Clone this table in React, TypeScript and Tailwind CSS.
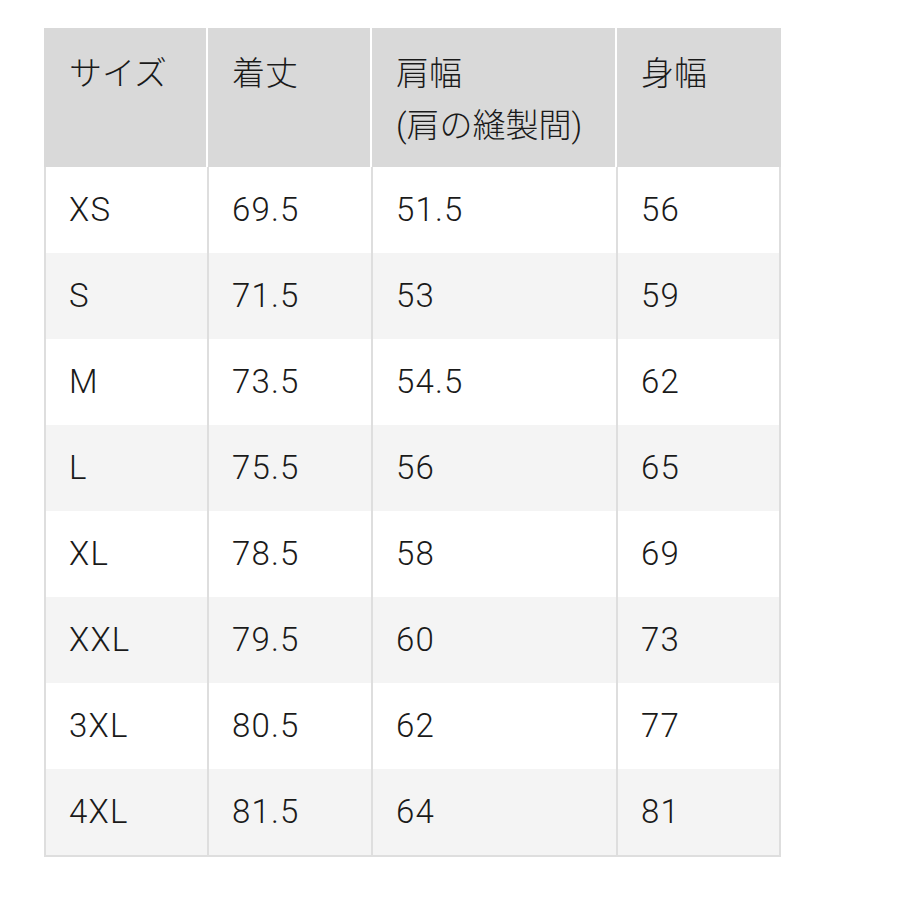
import React from "react";

const rows = [
  ["XS", "69.5", "51.5", "56"],
  ["S", "71.5", "53", "59"],
  ["M", "73.5", "54.5", "62"],
  ["L", "75.5", "56", "65"],
  ["XL", "78.5", "58", "69"],
  ["XXL", "79.5", "60", "73"],
  ["3XL", "80.5", "62", "77"],
  ["4XL", "81.5", "64", "81"],
];

const widths = ["w-[163px]", "w-[164px]", "w-[245px]", "w-[165px]"];

export default function App() {
  return (
    <div
      className="w-[900px] h-[900px] bg-white pt-[28px] pl-[44px] text-[#1a1a1a] font-light"
      style={{ fontFamily: 'Roboto, "Noto Sans CJK JP", sans-serif' }}
    >
      <div className="w-[737px]">
        <div className="flex gap-[2px]">
          <div className="w-[162px] h-[139px] bg-[#d9d9d9] pl-[25px] pt-[20px] text-[33px] leading-[52px]">サイズ</div>
          <div className="w-[162px] h-[139px] bg-[#d9d9d9] pl-[24px] pt-[20px] text-[33px] leading-[52px]">着丈</div>
          <div className="w-[243px] h-[139px] bg-[#d9d9d9] pl-[24px] pt-[20px] text-[33px] leading-[52px]">
            <div>肩幅</div>
            <div>(肩の縫製間)</div>
          </div>
          <div className="flex-1 h-[139px] bg-[#d9d9d9] pl-[24px] pt-[20px] text-[33px] leading-[52px]">身幅</div>
        </div>
        <div className="border-l-2 border-r-2 border-b-2 border-[#dedede]">
          {rows.map((r, i) => (
            <div key={r[0]} className={`flex h-[86px] ${i % 2 === 1 ? "bg-[#f4f4f4]" : "bg-white"}`}>
              {r.map((c, j) => (
                <div
                  key={j}
                  className={`${j === 3 ? "flex-1" : widths[j]} flex items-center pl-[23px] text-[33px] tracking-[1.2px] ${j < 3 ? "border-r-2 border-[#dedede]" : ""}`}
                >
                  {c}
                </div>
              ))}
            </div>
          ))}
        </div>
      </div>
    </div>
  );
}
